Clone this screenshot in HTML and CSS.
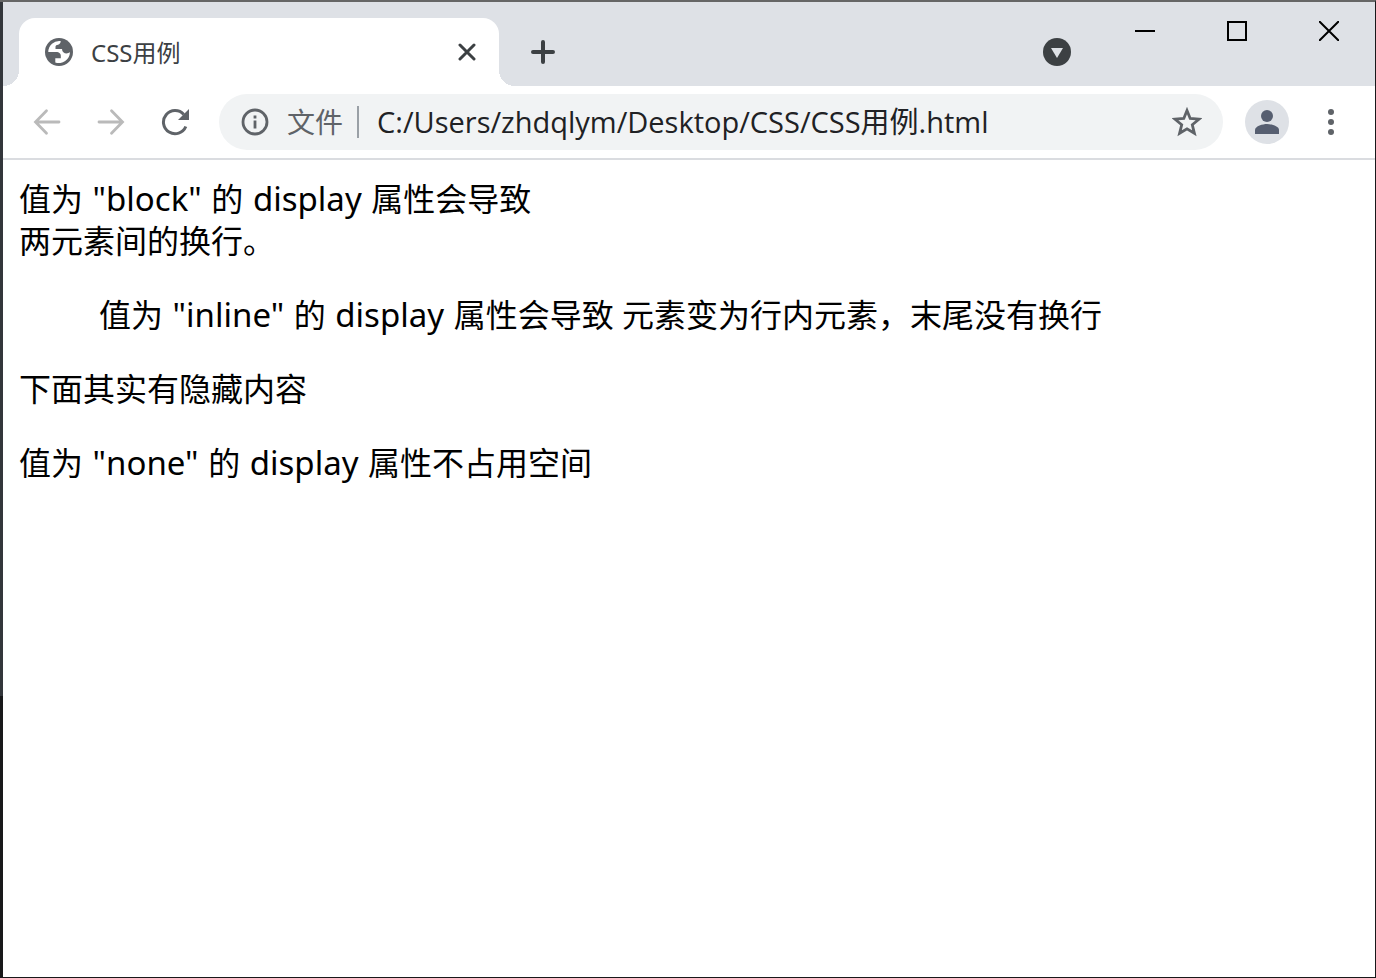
FILE: index.html
```html
<!DOCTYPE html>
<html lang="zh-CN">
<head>
<meta charset="utf-8">
<title>CSS用例</title>
<link rel="stylesheet" href="styles.css">
</head>
<body>
<div class="window">
  <header class="titlebar">
    <div class="tab">
      <svg class="globe" viewBox="0 0 28 28" aria-hidden="true"><circle cx="14" cy="14" r="14" fill="#5f6368"/><path fill="#fff" d="M15.700 3A11 11 0 0 0 3.300 14H11C14.500 14 15.800 16 15.800 17.500V20.300H10.300V24.500A11.200 11.200 0 0 0 25 14.300C22 16.500 17 15.500 17 11H10.500V8.700C10.500 6 15.700 8 15.700 3Z"/></svg>
      <span class="tab-title">CSS用例</span>
      <button class="icon-button tab-close" aria-label="关闭标签页"><svg width="18" height="18" viewBox="0 0 18 18"><path d="M2 2 16 16M16 2 2 16" fill="none" stroke="#3c4043" stroke-width="3" stroke-linecap="round"/></svg></button>
    </div>
    <button class="icon-button new-tab" aria-label="新建标签页"><svg width="24" height="24" viewBox="0 0 24 24"><path d="M12 2V22M2 12H22" fill="none" stroke="#3c4043" stroke-width="4" stroke-linecap="round"/></svg></button>
    <button class="icon-button tab-search" aria-label="搜索标签页"><svg width="28" height="28" viewBox="0 0 28 28"><circle cx="14" cy="14" r="14" fill="#3c4043"/><path d="M8 10H20L14 20Z" fill="#dee1e6"/></svg></button>
    <div class="window-controls">
      <button class="icon-button" aria-label="最小化"><svg width="20" height="20" viewBox="0 0 20 20"><path d="M0 10H20" stroke="#000" stroke-width="2"/></svg></button>
      <button class="icon-button" aria-label="最大化"><svg width="20" height="20" viewBox="0 0 20 20"><path d="M1 1H19V19H1Z" fill="none" stroke="#000" stroke-width="2"/></svg></button>
      <button class="icon-button" aria-label="关闭"><svg width="20" height="20" viewBox="0 0 20 20"><path d="M0 0 20 20M20 0 0 20" stroke="#000" stroke-width="2"/></svg></button>
    </div>
  </header>
  <nav class="toolbar">
    <div class="nav-buttons">
      <button class="icon-button" aria-label="后退"><svg width="28" height="28" viewBox="0 0 28 28"><path d="M26 14H3M13.500 2.700 2.500 14 13.500 25.300" fill="none" stroke="#bababa" stroke-width="2.800" stroke-linecap="round"/></svg></button>
      <button class="icon-button" aria-label="前进"><svg width="28" height="28" viewBox="0 0 28 28"><path d="M2 14H25M14.500 2.700 25.500 14 14.500 25.300" fill="none" stroke="#bababa" stroke-width="2.800" stroke-linecap="round"/></svg></button>
      <button class="icon-button" aria-label="重新加载"><svg width="28" height="28" viewBox="0 0 28 28"><path d="M24.800 18.500A11.600 11.600 0 1 1 22.800 6.500" fill="none" stroke="#5f6368" stroke-width="3"/><path d="M28 1V12H17Z" fill="#5f6368"/></svg></button>
    </div>
    <div class="omnibox">
      <button class="icon-button site-info"><svg width="28" height="28" viewBox="0 0 28 28" aria-hidden="true"><circle cx="14" cy="14" r="12" fill="none" stroke="#5f6368" stroke-width="2.800"/><path d="M12.600 7.500h2.800v3h-2.800zM12.600 12.500h2.800v8h-2.800z" fill="#5f6368"/></svg><span>文件</span></button>
      <input class="url" type="text" aria-label="地址栏" value="C:/Users/zhdqlym/Desktop/CSS/CSS用例.html" spellcheck="false">
      <button class="icon-button" aria-label="为此标签页添加书签"><svg width="30" height="30" viewBox="0 0 30 30"><path d="M15 3.500 18.200 11.500 27 12.200 20.300 17.800 22.400 26.300 15 21.800 7.600 26.300 9.700 17.800 3 12.200 11.800 11.500Z" fill="none" stroke="#5f6368" stroke-width="2.800"/></svg></button>
    </div>
    <button class="icon-button profile" aria-label="个人资料"><svg width="44" height="44" viewBox="0 0 44 44"><circle cx="22" cy="22" r="22" fill="#dee1e6"/><circle cx="22" cy="16" r="6" fill="#565e70"/><path d="M10 34V30C10 26 18 24 22 24S34 26 34 30V34Z" fill="#565e70"/></svg></button>
    <button class="icon-button menu" aria-label="菜单"><svg width="8" height="28" viewBox="0 0 8 28" fill="#5f6368"><circle cx="4" cy="4" r="3"/><circle cx="4" cy="14" r="3"/><circle cx="4" cy="24" r="3"/></svg></button>
  </nav>
  <main class="page">
    <div class="paragraph"><span class="block">值为<span class="latin"> "block" </span>的<span class="latin"> display </span>属性会导致</span><span class="block">两元素间的换行。</span></div>
    <ul class="paragraph inline-list"><li>值为<span class="latin"> "inline" </span>的<span class="latin"> display </span>属性会导致</li> <li>元素变为行内元素，末尾没有换行</li></ul>
    <p class="paragraph">下面其实有隐藏内容</p>
    <p class="paragraph">值为<span class="latin"> "none" </span>的<span class="latin"> display </span>属性不占用空间</p>
  </main>
</div>
</body>
</html>
```
FILE: styles.css
```css
* {
  box-sizing: border-box;
}

body {
  margin: 0;
  background: linear-gradient(#33363b 696px, #18181a 696px);
  font-family: "Noto Sans", "Noto Sans CJK SC", sans-serif;
}

.window {
  display: flex;
  flex-direction: column;
  min-height: 100vh;
  padding-left: 3px;
  border-top: 2px solid #666;
  border-right: 1px solid #18181a;
  border-bottom: 1px solid #18181a;
}

.icon-button {
  display: flex;
  align-items: center;
  justify-content: center;
  flex: none;
  padding: 0;
  border: 0;
  background: none;
  font: inherit;
}

svg {
  display: block;
  flex: none;
}

.titlebar {
  display: flex;
  align-items: flex-end;
  height: 84px;
  padding-left: 16px;
  background: #dee1e6;
}

.tab {
  position: relative;
  display: flex;
  align-items: center;
  flex: 0 1 480px;
  height: 68px;
  padding: 0 23px 0 26px;
  border-radius: 16px 16px 0 0;
  background: #fff;
}

.tab::before,
.tab::after {
  content: "";
  position: absolute;
  bottom: 0;
  width: 16px;
  height: 16px;
}

.tab::before {
  right: 100%;
  background: radial-gradient(circle at 0 0, transparent 16px, #fff 16px);
}

.tab::after {
  left: 100%;
  background: radial-gradient(circle at 100% 0, transparent 16px, #fff 16px);
}

.globe {
  width: 28px;
  height: 28px;
}

.tab-title {
  flex: 1;
  margin-left: 18px;
  padding-top: 2px;
  color: #3c4043;
  font-size: 24px;
  line-height: 32px;
}

.new-tab {
  width: 56px;
  height: 68px;
  margin-left: 16px;
}

.tab-search {
  width: 56px;
  height: 68px;
  margin-left: auto;
}

.window-controls {
  display: flex;
  align-self: flex-start;
  margin-left: 14px;
}

.window-controls .icon-button {
  width: 92px;
  height: 58px;
}

.toolbar {
  display: flex;
  align-items: center;
  height: 74px;
  padding: 0 40px 0 30px;
  border-bottom: 2px solid #dadce0;
  background: #fff;
}

.nav-buttons {
  display: flex;
  gap: 36px;
}

.omnibox {
  display: flex;
  align-items: center;
  flex: 1;
  min-width: 0;
  height: 56px;
  margin-left: 30px;
  padding: 0 21px 0 22px;
  border-radius: 28px;
  background: #f1f3f4;
}

.site-info {
  gap: 18px;
  height: 32px;
  padding-right: 14px;
  border-right: 2px solid #9aa0a6;
  color: #5f6368;
  font-size: 28px;
  line-height: 32px;
}

.url {
  flex: 1;
  min-width: 0;
  height: 48px;
  margin-left: 18px;
  padding: 0 0 4px;
  border: 0;
  outline: 0;
  background: none;
  color: #202124;
  font-family: "Open Sans", "Noto Sans CJK SC", sans-serif;
  font-size: 29px;
}

.profile {
  margin-left: 22px;
}

.menu {
  margin-left: 38px;
}

.page {
  flex: 1;
  padding: 18px 16px 16px;
  background: #fff;
  color: #000;
  font-size: 32px;
  line-height: 42px;
}

.paragraph {
  margin: 0 0 32px;
}

.block {
  display: block;
}

.latin {
  margin: 0 1px;
  font-size: 33px;
  line-height: 32px;
}

.inline-list {
  padding-left: 80px;
}

.inline-list li {
  display: inline;
}
```
